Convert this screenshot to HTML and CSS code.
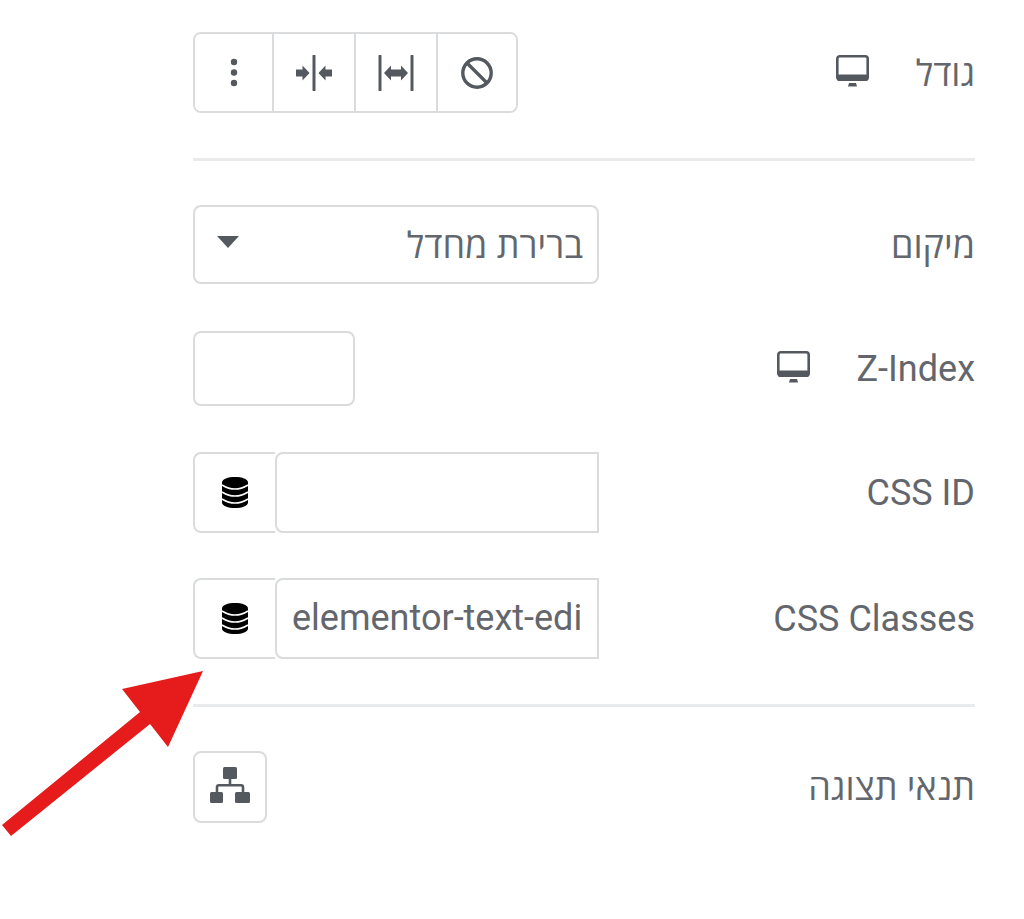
FILE: index.html
```html
<!DOCTYPE html>
<html lang="he" dir="rtl">
<head>
    <meta charset="UTF-8">
    <meta name="viewport" content="width=device-width, initial-scale=1.0">
    <title>Advanced settings</title>
    <link rel="stylesheet" href="styles.css">
</head>
<body>
    <div class="panel">
        <div class="row">
            <div class="label-group">
                <span class="label hebrew">גודל</span>
                <svg class="monitor" viewBox="0 0 33 32"><rect x="1.300" y="1.300" width="30.400" height="23.400" rx="2.500" fill="none" stroke="currentColor" stroke-width="2.600"/><rect x="1" y="19.500" width="31" height="6.500" rx="2" fill="currentColor"/><path d="M13 28h7l1 3.500h-9z" fill="currentColor"/></svg>
            </div>
            <div class="button-group">
                <button class="group-item">
                    <svg width="36" height="36" viewBox="0 0 36 36"><circle cx="18" cy="18" r="14.200" fill="none" stroke="currentColor" stroke-width="3.400"/><path d="M8 8l20 20" stroke="currentColor" stroke-width="3.400"/></svg>
                </button>
                <button class="group-item">
                    <svg width="40" height="36" viewBox="0 0 40 36"><path d="M4 1v34M36 1v34" stroke="currentColor" stroke-width="3" stroke-linecap="round"/><path d="M8 18l7-7.500v4h10v-4l7 7.500-7 7.500v-4H15v4z" fill="currentColor"/></svg>
                </button>
                <button class="group-item">
                    <svg width="40" height="36" viewBox="0 0 40 36"><path d="M20 1v34" stroke="currentColor" stroke-width="3" stroke-linecap="round"/><path d="M2 14.500h6.500v-4l7 7.500-7 7.500v-4H2zM38 14.500h-6.500v-4l-7 7.500 7 7.500v-4H38z" fill="currentColor"/></svg>
                </button>
                <button class="group-item">
                    <svg width="8" height="30" viewBox="0 0 8 30"><circle cx="4" cy="4" r="3.200"/><circle cx="4" cy="14.500" r="3.200"/><circle cx="4" cy="25" r="3.200"/></svg>
                </button>
            </div>
        </div>

        <hr class="divider">

        <div class="row row-select">
            <div class="label-group"><span class="label hebrew">מיקום</span></div>
            <div class="select-box">
                <span class="hebrew">ברירת מחדל</span>
                <svg width="24" height="14" viewBox="0 0 24 14"><path d="M1 1h22L12 13z"/></svg>
            </div>
        </div>

        <div class="row row-number">
            <div class="label-group">
                <span class="label" dir="ltr">Z-Index</span>
                <svg class="monitor" viewBox="0 0 33 32"><rect x="1.300" y="1.300" width="30.400" height="23.400" rx="2.500" fill="none" stroke="currentColor" stroke-width="2.600"/><rect x="1" y="19.500" width="31" height="6.500" rx="2" fill="currentColor"/><path d="M13 28h7l1 3.500h-9z" fill="currentColor"/></svg>
            </div>
            <div class="number-box"></div>
        </div>

        <div class="row">
            <div class="label-group"><span class="label" dir="ltr">CSS ID</span></div>
            <div class="dynamic-field">
                <div class="field-input"></div>
                <button class="field-button">
                    <svg width="26" height="31" viewBox="0 0 26 31"><path d="M13 0C6 0 0 2 0 5.500v20C0 29 6 31 13 31s13-2 13-5.500v-20C26 2 20 0 13 0z"/><path d="M0 8q13 8 26 0M0 15q13 8 26 0M0 22q13 8 26 0" fill="none" stroke="#fff" stroke-width="1.600"/></svg>
                </button>
            </div>
        </div>

        <div class="row">
            <div class="label-group"><span class="label" dir="ltr">CSS Classes</span></div>
            <div class="dynamic-field">
                <div class="field-input" dir="ltr">elementor-text-edi</div>
                <button class="field-button">
                    <svg width="26" height="31" viewBox="0 0 26 31"><path d="M13 0C6 0 0 2 0 5.500v20C0 29 6 31 13 31s13-2 13-5.500v-20C26 2 20 0 13 0z"/><path d="M0 8q13 8 26 0M0 15q13 8 26 0M0 22q13 8 26 0" fill="none" stroke="#fff" stroke-width="1.600"/></svg>
                </button>
            </div>
        </div>

        <hr class="divider">

        <div class="row">
            <div class="label-group"><span class="label hebrew">תנאי תצוגה</span></div>
            <button class="icon-button">
                <svg width="40" height="36" viewBox="0 0 40 36"><rect x="13" y="0" width="14" height="12" rx="1.500"/><rect x="0" y="25" width="13" height="11" rx="1.500"/><rect x="25" y="25" width="15" height="11" rx="1.500"/><path d="M20 12v6.300M7 25v-4.700a2 2 0 0 1 2-2h22a2 2 0 0 1 2 2v4.700" fill="none" stroke="currentColor" stroke-width="2.600"/></svg>
            </button>
        </div>

        <svg class="arrow" width="204" height="166" viewBox="0 0 204 166"><polygon points="203,0 122,18 140,41 2,154 11,165 150,53 168,76"/></svg>
    </div>
</body>
</html>
```

FILE: styles.css
```css
body {
    margin: 0;
    background-color: #fff;
    color: #63676d;
    font-family: Roboto, sans-serif;
    font-size: 36px;
}
.hebrew {
    font-family: "Open Sans", "Liberation Sans", sans-serif;
}
.panel {
    position: relative;
    height: 887px;
    padding: 32px 49px 0 193px;
}
.row {
    display: flex;
    justify-content: space-between;
    align-items: center;
    margin-bottom: 45px;
}
.row-select {
    margin-bottom: 47px;
}
.row-number {
    margin-bottom: 46px;
}
.label-group {
    display: flex;
    align-items: center;
    gap: 47px;
}
.label {
    line-height: 40px;
}
.monitor {
    width: 33px;
    height: 32px;
    margin-top: -4px;
    color: #54595f;
}
.divider {
    height: 3px;
    margin: 0 0 44px;
    border: none;
    background-color: #e9eaeb;
}
button {
    display: flex;
    align-items: center;
    justify-content: center;
    padding: 0;
    background-color: #fff;
    border: 2px solid #d9dbdd;
    color: #54595f;
    fill: currentColor;
}
.button-group {
    display: flex;
    width: 325px;
    height: 81px;
    box-sizing: border-box;
    border: 2px solid #d9dbdd;
    border-radius: 8px;
    overflow: hidden;
}
.group-item {
    flex: none;
    width: 82px;
    border: none;
    border-left: 2px solid #d9dbdd;
}
.group-item:first-child {
    width: 80px;
}
.group-item:last-child {
    flex: 1;
    border-left: none;
}
.select-box {
    display: flex;
    justify-content: space-between;
    align-items: center;
    width: 406px;
    height: 79px;
    box-sizing: border-box;
    padding: 0 14px 0 21px;
    border: 2px solid #d9dbdd;
    border-radius: 8px;
    fill: #54595f;
}
.select-box svg {
    margin-top: -6px;
}
.number-box {
    width: 162px;
    height: 75px;
    box-sizing: border-box;
    border: 2px solid #d9dbdd;
    border-radius: 8px;
}
.dynamic-field {
    display: flex;
    width: 406px;
    height: 81px;
}
.field-input {
    flex: 1;
    box-sizing: border-box;
    padding: 0 15px;
    border: 2px solid #d9dbdd;
    border-radius: 8px 0 0 8px;
    line-height: 77px;
    overflow: hidden;
    white-space: nowrap;
    text-align: left;
}
.field-button {
    width: 82px;
    border-right: none;
    border-radius: 8px 0 0 8px;
    color: #000;
}
.icon-button {
    width: 74px;
    height: 72px;
    border-radius: 8px;
}
.icon-button svg {
    margin-top: -4px;
}
.arrow {
    position: absolute;
    left: 0;
    top: 671px;
    fill: #e61b1b;
}
```
